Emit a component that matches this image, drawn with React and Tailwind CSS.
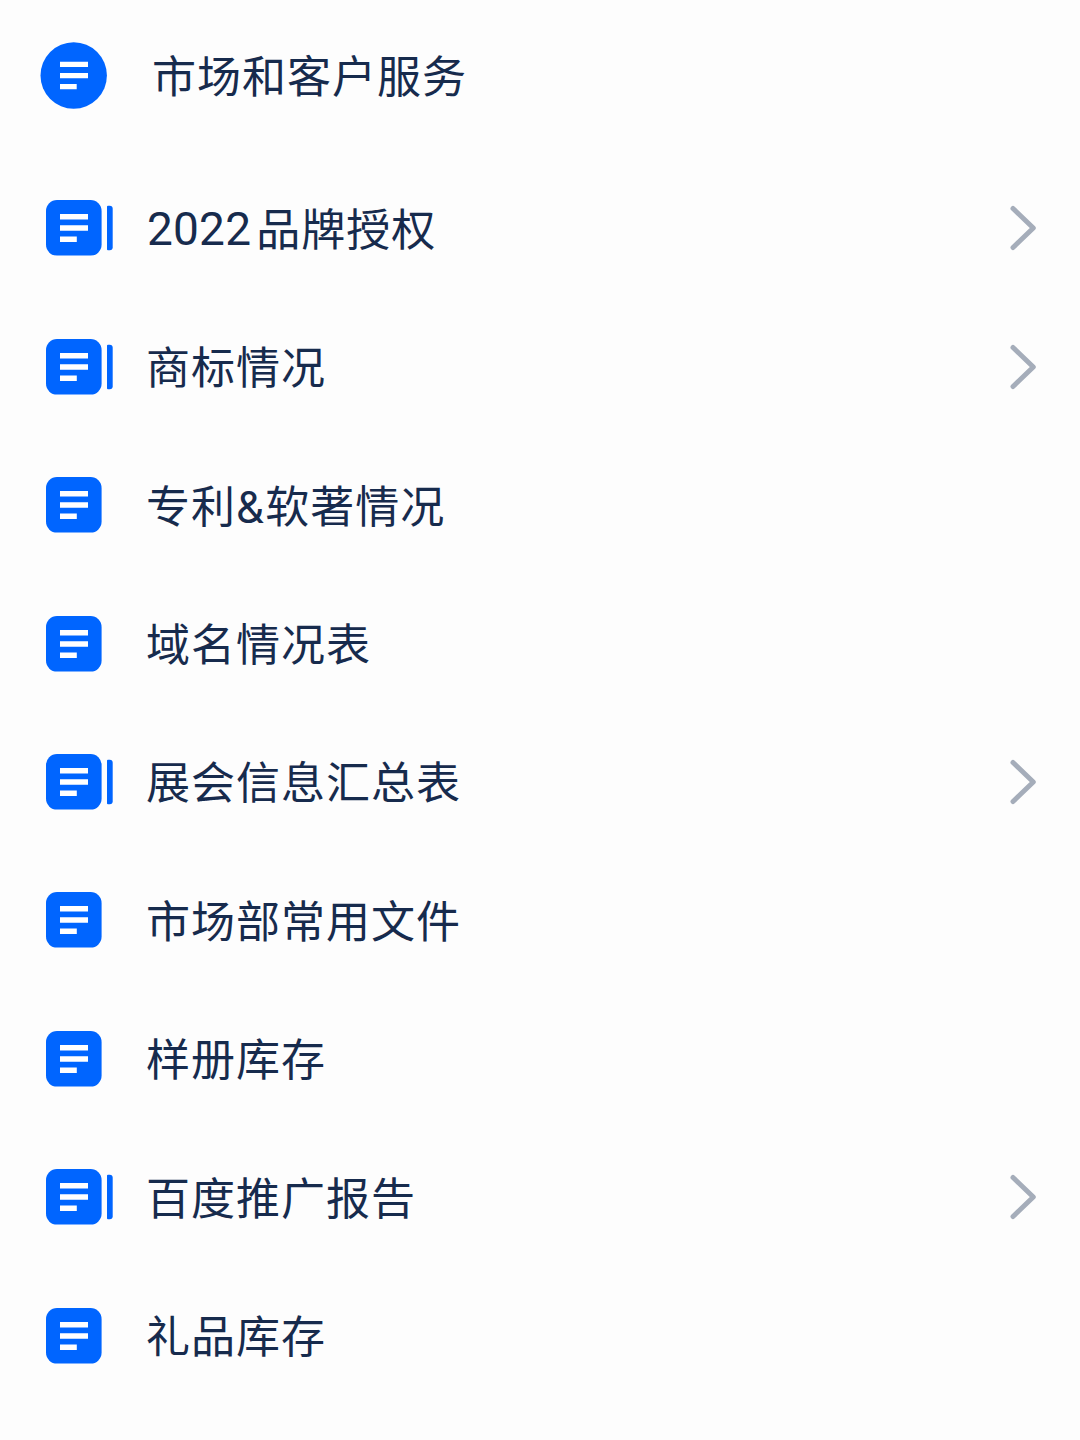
import React from 'react';

const items = [
  { title: '2022品牌授权', hasChildren: true, number: '2022', label: '品牌授权' },
  { title: '商标情况', hasChildren: true },
  { title: '专利&软著情况' },
  { title: '域名情况表' },
  { title: '展会信息汇总表', hasChildren: true },
  { title: '市场部常用文件' },
  { title: '样册库存' },
  { title: '百度推广报告', hasChildren: true },
  { title: '礼品库存' },
];

const SpaceIcon = () => (
  <svg className="h-[67px] w-[67px] shrink-0" viewBox="0 0 67 67">
    <circle cx="33.7" cy="33.5" r="33.2" fill="#0065ff" />
    <path d="M20 19.7h28v5.3H20zM20 31h28v5.3H20zM20 42h16.7v5.3H20z" fill="#fff" />
  </svg>
);

const PageIcon = ({ stacked }) => (
  <svg className="h-14 w-[67px] shrink-0" viewBox="0 0 67 56">
    <rect width="55.6" height="55.6" rx="11" fill="#0065ff" />
    <path d="M14 14h28v5.5H14zM14 25.2h28v5.5H14zM14 36.4h16.8v5.5H14z" fill="#fff" />
    {stacked && (
      <path d="M62 5.8h1.7a3 3 0 0 1 3 3v38.4a3 3 0 0 1-3 3H62a1 1 0 0 1-1-1V6.8a1 1 0 0 1 1-1z" fill="#0065ff" />
    )}
  </svg>
);

const Chevron = () => (
  <svg className="h-12 w-8 shrink-0" viewBox="0 0 32 48" fill="none">
    <path d="M5 4.5l20.3 19.5L5 43.5" stroke="#a5adba" strokeWidth="5" strokeLinecap="round" strokeLinejoin="round" />
  </svg>
);

const PageRow = ({ item }) => (
  <li className="flex h-[138.45px] items-center pr-10 pl-[46px]">
    <PageIcon stacked={item.hasChildren} />
    <span className="ml-[33px] flex-1 pt-[3px]">
      {item.number ? (
        <span className="flex">
          <span className="-mt-px mr-[5px] ml-px font-['Roboto',sans-serif] text-[46px] tracking-[0.2px]">{item.number}</span>
          {item.label}
        </span>
      ) : (
        item.title
      )}
    </span>
    {item.hasChildren && <Chevron />}
  </li>
);

const App = () => (
  <main className="h-[1440px] overflow-hidden bg-[#fdfdfd] font-['Inter','Noto_Sans_CJK_SC',sans-serif] text-[44px] leading-[60px] tracking-[1px] text-[#172b4d]">
    <header className="flex h-[159px] items-start pt-[42px] pl-10">
      <SpaceIcon />
      <h1 className="mt-[5px] ml-[45px]">市场和客户服务</h1>
    </header>
    <ul>
      {items.map((item) => (
        <PageRow key={item.title} item={item} />
      ))}
    </ul>
  </main>
);

export default App;
